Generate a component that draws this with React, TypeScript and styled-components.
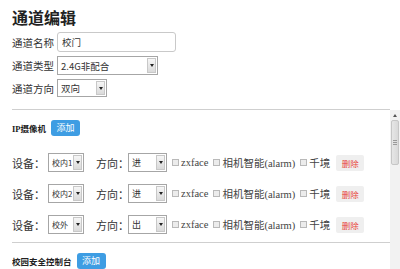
import React from 'react';
import styled, { createGlobalStyle } from 'styled-components';

const GlobalStyle = createGlobalStyle`
  html, body {
    margin: 0;
    padding: 0;
    background: #fff;
    overflow: hidden;
  }
  body {
    font-family: "Noto Sans CJK SC", "Liberation Sans", sans-serif;
    color: #333;
  }
`;

const Page = styled.div`
  padding: 6px 0 0 12px;
  width: 400px;
  box-sizing: border-box;
`;

const Title = styled.h1`
  margin: 0;
  font-size: 16px;
  line-height: 22px;
  font-weight: bold;
  color: #222;
`;

const Form = styled.div`
  display: flex;
  flex-direction: column;
  gap: 4px;
  margin-top: 4px;
`;

const FormRow = styled.div`
  display: flex;
  align-items: center;
`;

const FormLabel = styled.span`
  width: 45px;
  font-size: 10.5px;
  color: #333;
  white-space: nowrap;
`;

const TextInput = styled.input`
  box-sizing: border-box;
  width: 119px;
  height: 20px;
  border: 1px solid #c9c9c9;
  border-radius: 3px;
  padding: 0 0 0 4px;
  font-family: "Noto Sans CJK SC", sans-serif;
  font-size: 9.5px;
  color: #333;
  outline: none;
`;

const SelectWrap = styled.div<{ $w: number; $h: number }>`
  box-sizing: border-box;
  display: inline-flex;
  align-items: stretch;
  width: ${p => p.$w}px;
  height: ${p => p.$h}px;
  border: 1px solid #a6a6a6;
  background: #fff;
  flex-shrink: 0;
`;

const SelectText = styled.span<{ $size: number }>`
  flex: 1;
  display: flex;
  align-items: center;
  padding-left: 3px;
  font-size: ${p => p.$size}px;
  color: #333;
  white-space: nowrap;
  overflow: hidden;
`;

const ArrowBox = styled.span`
  box-sizing: border-box;
  width: 9px;
  margin: 1px;
  border: 1px solid #c8c8c8;
  background: linear-gradient(#f6f6f6, #dadada);
  display: flex;
  align-items: center;
  justify-content: center;
  flex-shrink: 0;

  &::after {
    content: '';
    border-left: 2px solid transparent;
    border-right: 2px solid transparent;
    border-top: 3px solid #222;
  }
`;

const Select: React.FC<{ value: string; w: number; h: number; size?: number }> = ({ value, w, h, size = 10 }) => (
  <SelectWrap $w={w} $h={h}>
    <SelectText $size={size}>{value}</SelectText>
    <ArrowBox />
  </SelectWrap>
);

const ScrollFrame = styled.div`
  margin-top: 12px;
  height: 162px;
  display: flex;
`;

const ScrollContent = styled.div`
  flex: 1;
  overflow: hidden;
  border-top: 1px solid #cfcfcf;
`;

const ScrollBar = styled.div`
  width: 10px;
  margin-top: 1px;
  background: #f2f2f2;
  display: flex;
  flex-direction: column;
`;

const ScrollArrow = styled.div`
  height: 10px;
  display: flex;
  align-items: center;
  justify-content: center;

  &::after {
    content: '';
    border-left: 2px solid transparent;
    border-right: 2px solid transparent;
    border-bottom: 3px solid #555;
  }
`;

const ScrollThumb = styled.div`
  box-sizing: border-box;
  height: 45px;
  margin: 0 1px;
  border: 1px solid #c6c6c6;
  border-radius: 2px;
  background: linear-gradient(90deg, #e6e6e6, #d9d9d9);
  display: flex;
  flex-direction: column;
  align-items: center;
  justify-content: center;
  gap: 1px;
`;

const Grip = styled.span`
  width: 4px;
  height: 1px;
  background: #999;
`;

const Section = styled.div`
  padding: 10px 0 8px;
  border-bottom: 1px solid #cfcfcf;
`;

const SectionHead = styled.div`
  display: flex;
  align-items: center;
  height: 16px;
`;

const SectionTitle = styled.span`
  font-family: "Liberation Serif", "Noto Sans CJK SC", serif;
  font-weight: bold;
  font-size: 8.5px;
  color: #222;
  margin-right: 5px;
`;

const AddButton = styled.button`
  width: 29px;
  height: 16px;
  padding: 0;
  border: none;
  border-radius: 3px;
  background: #3e9de3;
  color: #fff;
  font-family: "Noto Sans CJK SC", sans-serif;
  font-size: 9px;
  line-height: 16px;
`;

const Rows = styled.div`
  display: flex;
  flex-direction: column;
  gap: 12px;
  margin-top: 17px;
`;

const DeviceRow = styled.div`
  display: flex;
  align-items: center;
  height: 19px;
`;

const RowLabel = styled.span<{ $w: number }>`
  width: ${p => p.$w}px;
  font-size: 11px;
  color: #333;
  white-space: nowrap;
`;

const Gap = styled.span<{ $w: number }>`
  width: ${p => p.$w}px;
  flex-shrink: 0;
`;

const Check = styled.span`
  box-sizing: border-box;
  width: 7px;
  height: 7px;
  border: 1px solid #b9b9b9;
  background: #ececec;
  margin: 0 2px 0 5px;
  flex-shrink: 0;
`;

const CheckText = styled.span`
  font-family: "Liberation Serif", "Noto Sans CJK SC", serif;
  font-size: 10.5px;
  color: #444;
  white-space: nowrap;
`;

const DeleteButton = styled.button`
  width: 28px;
  height: 16px;
  padding: 0;
  margin-left: 6px;
  border: none;
  border-radius: 2px;
  background: #efefef;
  color: #e8443a;
  font-family: "Noto Sans CJK SC", sans-serif;
  font-size: 8.5px;
  line-height: 16px;
`;

const devices = [
  { name: '校内1', dir: '进' },
  { name: '校内2', dir: '进' },
  { name: '校外', dir: '出' },
];

export default function App() {
  return (
    <Page>
      <GlobalStyle />
      <Title>通道编辑</Title>
      <Form>
        <FormRow>
          <FormLabel>通道名称</FormLabel>
          <TextInput defaultValue="校门" />
        </FormRow>
        <FormRow>
          <FormLabel>通道类型</FormLabel>
          <Select value="2.4G非配合" w={101} h={19} size={9.5} />
        </FormRow>
        <FormRow>
          <FormLabel>通道方向</FormLabel>
          <Select value="双向" w={50} h={18} size={9.5} />
        </FormRow>
      </Form>
      <ScrollFrame>
        <ScrollContent>
          <Section>
            <SectionHead>
              <SectionTitle>IP摄像机</SectionTitle>
              <AddButton>添加</AddButton>
            </SectionHead>
            <Rows>
              {devices.map(d => (
                <DeviceRow key={d.name}>
                  <RowLabel $w={36}>设备：</RowLabel>
                  <Select value={d.name} w={36} h={19} size={8} />
                  <Gap $w={12} />
                  <RowLabel $w={32}>方向：</RowLabel>
                  <Select value={d.dir} w={39} h={19} size={9} />
                  <Check />
                  <CheckText>zxface</CheckText>
                  <Check />
                  <CheckText>相机智能(alarm)</CheckText>
                  <Check />
                  <CheckText>千境</CheckText>
                  <DeleteButton>删除</DeleteButton>
                </DeviceRow>
              ))}
            </Rows>
          </Section>
          <Section>
            <SectionHead>
              <SectionTitle>校园安全控制台</SectionTitle>
              <AddButton>添加</AddButton>
            </SectionHead>
          </Section>
        </ScrollContent>
        <ScrollBar>
          <ScrollArrow />
          <ScrollThumb>
            <Grip />
            <Grip />
            <Grip />
          </ScrollThumb>
        </ScrollBar>
      </ScrollFrame>
    </Page>
  );
}
